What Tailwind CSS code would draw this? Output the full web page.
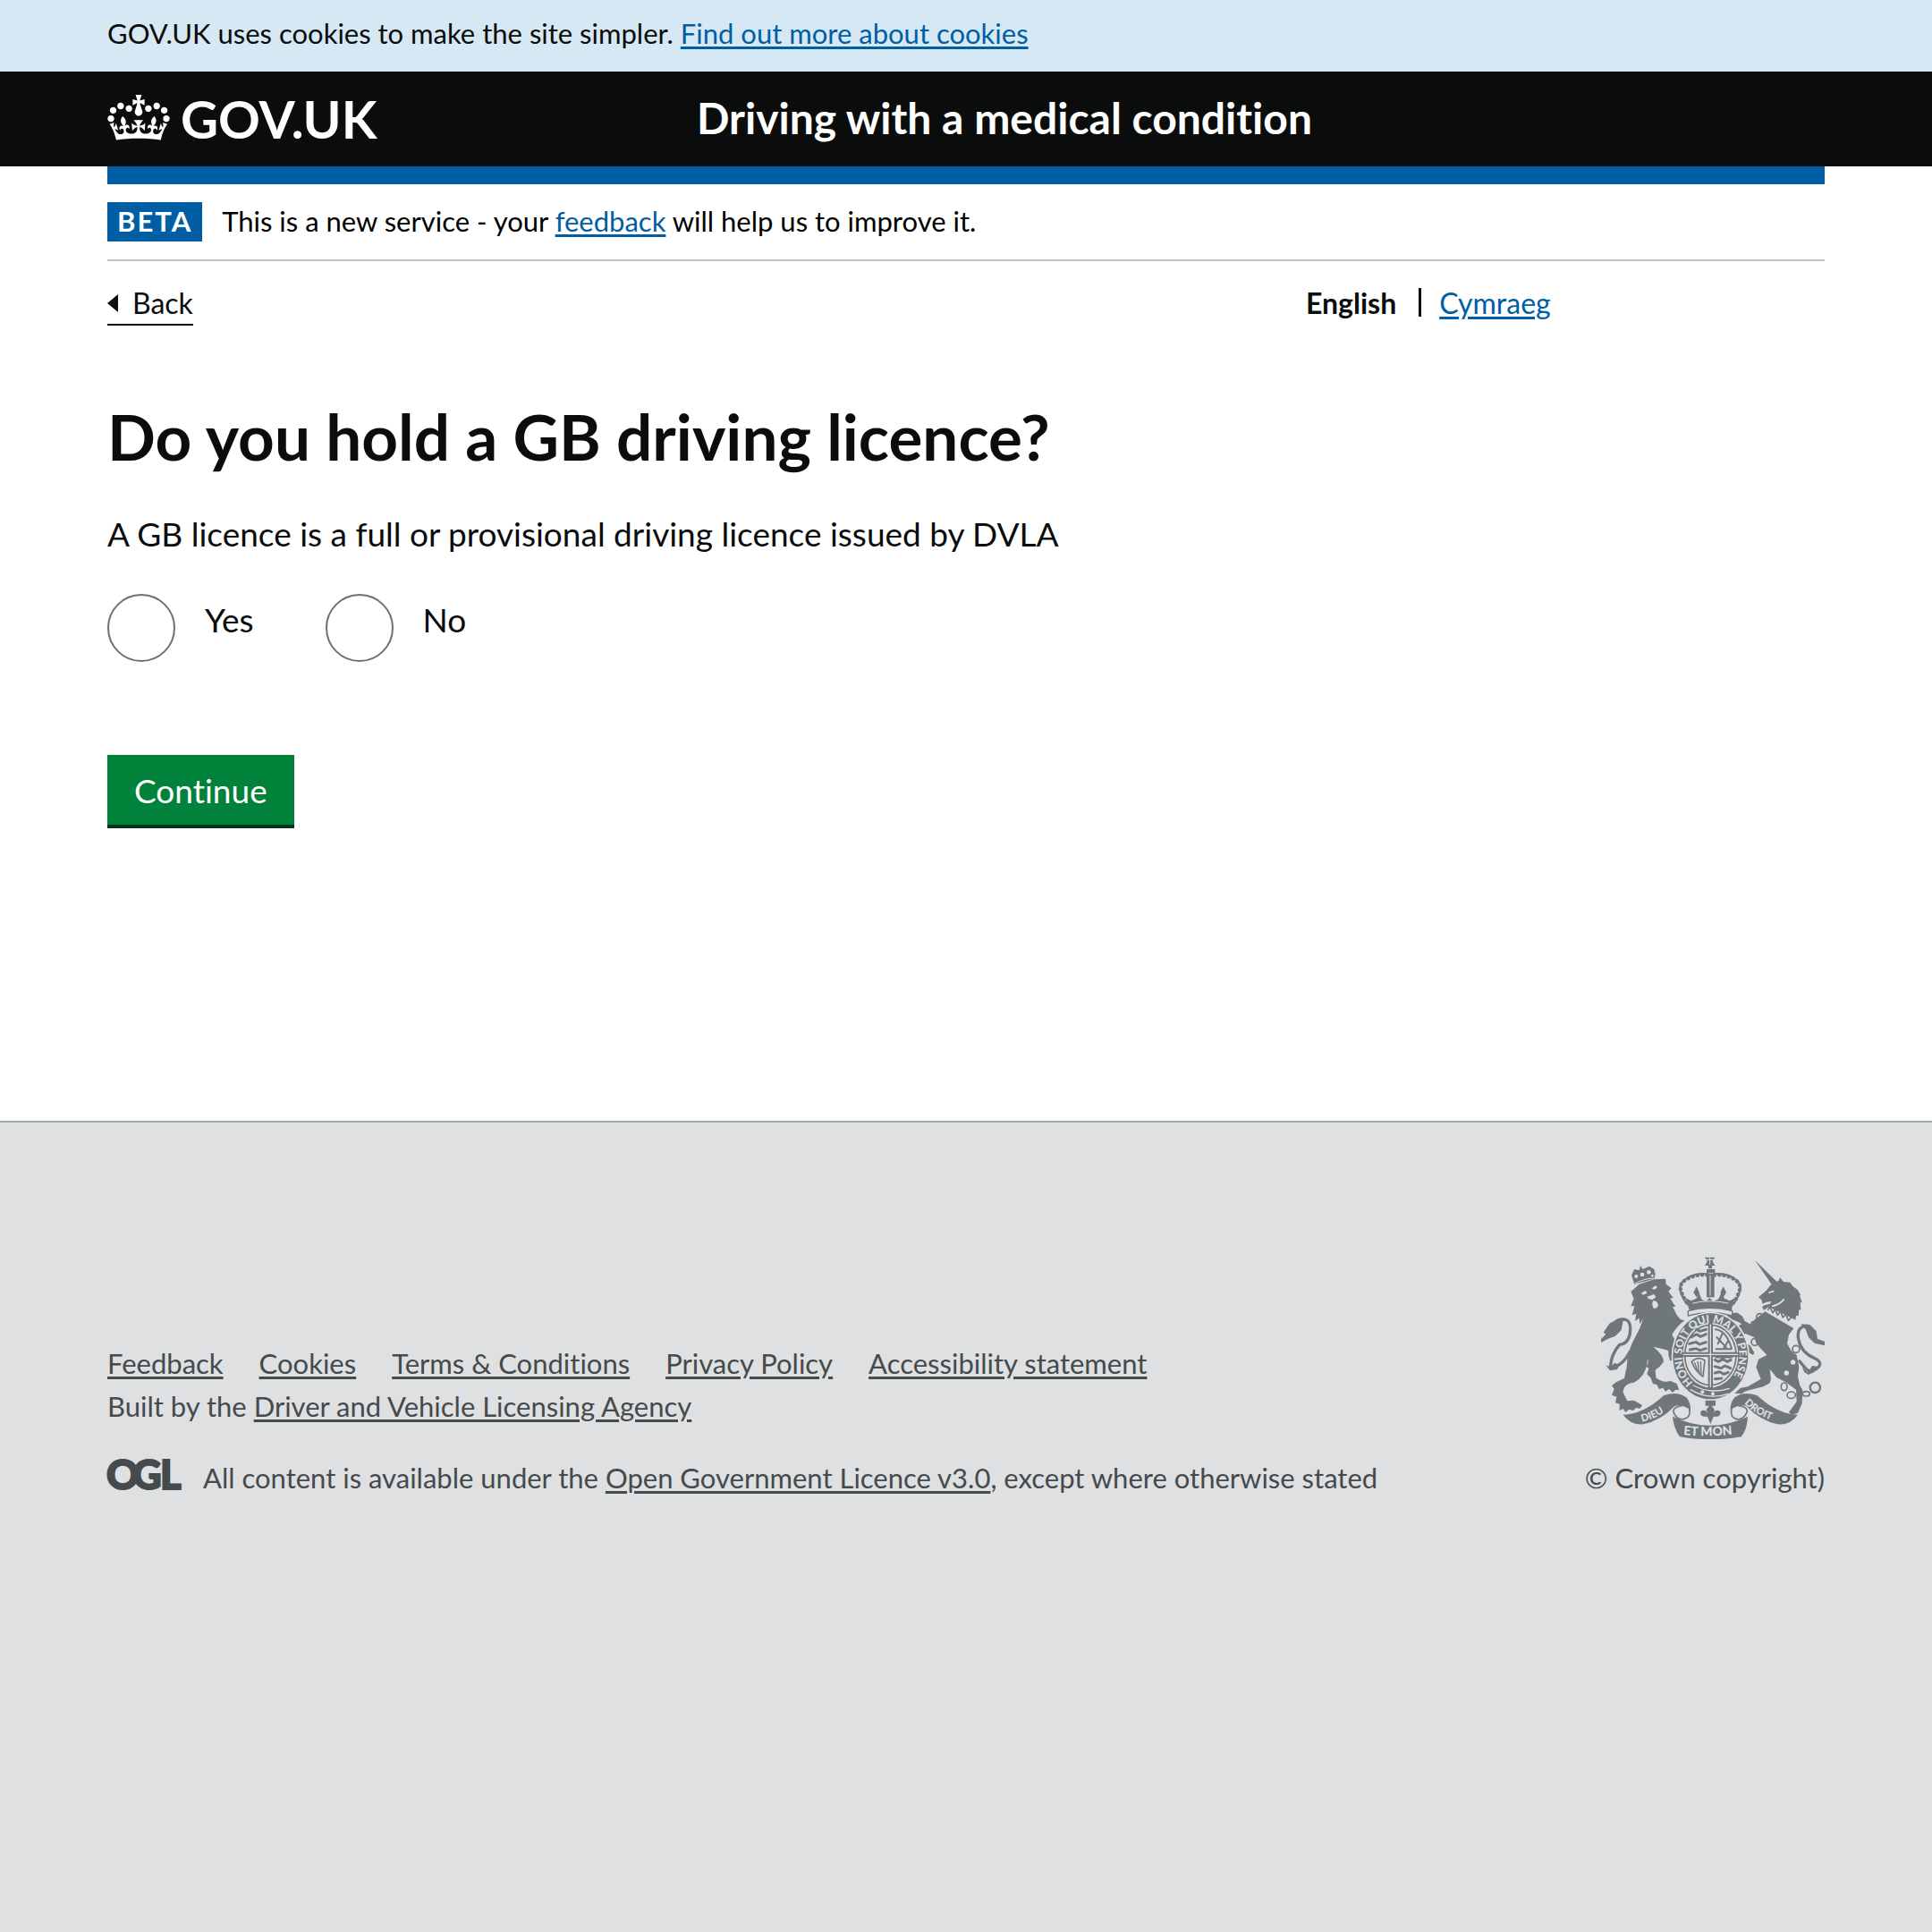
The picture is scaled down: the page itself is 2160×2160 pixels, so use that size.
<!DOCTYPE html>
<html lang="en">
<head>
<meta charset="utf-8">
<meta name="viewport" content="width=device-width, initial-scale=1">
<title>Do you hold a GB driving licence? - GOV.UK</title>
<script src="https://cdn.jsdelivr.net/npm/@tailwindcss/browser@4"></script>
</head>
<body class="flex min-h-screen flex-col bg-white font-['Lato',sans-serif] text-[31px] leading-10 text-[#0b0c0c] [font-variant-ligatures:none]">

  <div class="bg-[#d5e8f3] px-[120px] pt-[17px] pb-[23px]">
    <p>GOV.UK uses cookies to make the site simpler. <a href="#" class="text-[#005ea5] underline decoration-[3px] underline-offset-[3px]">Find out more about cookies</a></p>
  </div>

  <header class="bg-[#0b0c0c] px-[120px] text-white">
    <div class="flex h-[106px] items-center">
      <a href="#" class="flex w-[659px] items-center gap-3 text-[58px] leading-[60px] font-bold">
        <svg class="mb-1 h-[51px] w-[70px] fill-white" viewBox="0 0 132 97" aria-hidden="true"><path d="M25 30.2c3.5 1.5 7.7-.2 9.1-3.7 1.5-3.6-.2-7.8-3.9-9.2-3.6-1.4-7.6.3-9.1 3.9-1.4 3.5.3 7.5 3.9 9zM9 39.5c3.6 1.5 7.8-.2 9.2-3.7 1.5-3.6-.2-7.8-3.9-9.1-3.6-1.5-7.6.2-9.1 3.8-1.4 3.5.3 7.5 3.8 9zM4.4 57.2c3.5 1.5 7.7-.2 9.1-3.8 1.5-3.6-.2-7.7-3.9-9.1-3.5-1.5-7.6.3-9.1 3.8-1.4 3.5.3 7.6 3.9 9.1zm38.3-21.4c3.5 1.5 7.7-.2 9.1-3.8 1.5-3.6-.2-7.7-3.9-9.1-3.6-1.5-7.6.3-9.1 3.8-1.3 3.6.4 7.7 3.9 9.1zm64.4-5.6c-3.6 1.5-7.8-.2-9.1-3.7-1.5-3.6.2-7.8 3.8-9.2 3.6-1.4 7.7.3 9.2 3.9 1.3 3.5-.4 7.5-3.9 9zm15.9 9.3c-3.6 1.5-7.7-.2-9.1-3.7-1.5-3.6.2-7.8 3.7-9.1 3.6-1.5 7.7.2 9.2 3.8 1.5 3.5-.3 7.5-3.8 9zm4.7 17.7c-3.6 1.5-7.8-.2-9.2-3.8-1.5-3.6.2-7.7 3.9-9.1 3.6-1.5 7.7.3 9.2 3.8 1.3 3.5-.4 7.6-3.9 9.1zM89.3 35.8c-3.6 1.5-7.8-.2-9.2-3.8-1.4-3.6.2-7.7 3.9-9.1 3.6-1.5 7.7.3 9.2 3.8 1.4 3.6-.3 7.7-3.9 9.1zM69.7 17.7l8.9 4.7V9.3l-8.9 2.8c-.2-.3-.5-.6-.9-.9L72.4 0H59.6l3.5 11.2c-.3.3-.6.5-.9.9l-8.8-2.8v13.1l8.8-4.7c.3.3.6.7.9.9l-5 15.4v.1c-.2.8-.4 1.6-.4 2.4 0 4.1 3.1 7.5 7 8.1h.2c.3 0 .7.1 1 .1.4 0 .7 0 1-.1h.2c4-.6 7.1-4.1 7.1-8.1 0-.8-.1-1.7-.4-2.4V34l-5.1-15.4c.4-.2.7-.6 1-.9zM66 92.8c16.9 0 32.8 1.1 47.1 3.2 4-16.9 8.9-26.7 14-33.5l-9.6-3.4c1 4.9 1.1 7.2 0 10.2-1.5-1.4-3-4.3-4.2-8.7L108.6 76c2.8-2 5-3.2 7.5-3.3-4.4 9.4-10 11.9-13.6 11.2-4.3-.8-6.3-4.6-5.6-7.9 1-4.7 5.7-5.9 8-.5 4.3-8.7-3-11.4-7.6-8.8 7.1-7.2 7.9-13.5 2.1-21.1-8 6.1-8.1 12.3-4.5 20.8-4.7-5.4-12.1-2.5-9.5 6.2 3.4-5.2 7.9-2 7.2 3.1-.6 4.3-6.4 7.8-13.5 7.2-10.3-.9-10.9-8-11.2-13.8 2.5-.5 7.1 1.8 11 7.3L80.2 60c-4.1 4.4-8 5.3-12.3 5.4 1.4-4.4 8-11.6 8-11.6H55.5s6.4 7.2 7.9 11.6c-4.2-.1-8-1-12.3-5.4l1.4 16.4c3.9-5.5 8.5-7.7 10.9-7.3-.3 5.8-.9 12.8-11.1 13.8-7.2.6-12.9-2.9-13.5-7.2-.7-5 3.8-8.3 7.1-3.1 2.7-8.7-4.6-11.6-9.4-6.2 3.7-8.5 3.6-14.7-4.6-20.8-5.8 7.6-5 13.9 2.2 21.1-4.7-2.6-11.9.1-7.7 8.8 2.3-5.5 7.1-4.2 8.1.5.7 3.3-1.3 7.1-5.7 7.9-3.5.7-9-1.8-13.5-11.2 2.5.1 4.7 1.3 7.5 3.3l-4.7-15.4c-1.2 4.4-2.7 7.2-4.3 8.7-1.1-3-.9-5.3 0-10.2l-9.5 3.4c5 6.9 9.9 16.7 14 33.5 14.8-2.1 30.8-3.2 47.7-3.2z"/></svg>
        <span>GOV.UK</span>
      </a>
      <a href="#" class="pb-0.5 text-5xl leading-[60px] font-bold">Driving with a medical condition</a>
    </div>
  </header>

  <div class="flex-1 px-[120px]">
    <div class="h-5 bg-[#005ea5]"></div>

    <div class="flex items-center gap-[22px] border-b-2 border-[#bfc1c3] py-5">
      <strong class="bg-[#005ea5] px-[11px] pt-px pb-[3px] tracking-[2px] text-white">BETA</strong>
      <p class="pb-0.5 text-black">This is a new service - your <a href="#" class="text-[#005ea5] underline decoration-[3px] underline-offset-[3px]">feedback</a> will help us to improve it.</p>
    </div>

    <div class="grid grid-cols-[1340px_1fr] items-start pt-[27px] text-[32px]">
      <a href="#" class="flex items-center gap-4 justify-self-start border-b-2 border-[#0b0c0c] pb-[3px]">
        <svg class="h-5 w-3 fill-[#0b0c0c]" viewBox="0 0 12 20" aria-hidden="true"><path d="M12 0v20L0 10z"/></svg>
        <span>Back</span>
      </a>
      <nav aria-label="Language" class="flex items-start">
        <span class="mr-[25px] font-bold">English</span>
        <span class="mt-[3px] mr-5 h-8 w-[3px] bg-[#0b0c0c]"></span>
        <a href="#" class="text-[#005ea5] underline decoration-[3px] underline-offset-[3px]">Cymraeg</a>
      </nav>
    </div>

    <main class="pt-[84px]">
      <h1 id="question" class="text-[71px] leading-[80px] font-bold">Do you hold a GB driving licence?</h1>
      <p class="mt-11 text-[37px] leading-[50px]">A GB licence is a full or provisional driving licence issued by DVLA</p>

      <form onsubmit="return false">
        <fieldset aria-labelledby="question" class="mt-[42px] flex gap-20 text-[37px] leading-[50px]">
          <div class="flex gap-[33px]">
            <input type="radio" name="licence" id="licence-yes" class="size-[76px] appearance-none rounded-full border-2 border-[#6f7071] checked:bg-[#6f7071]">
            <label for="licence-yes" class="pt-1">Yes</label>
          </div>
          <div class="flex gap-[33px]">
            <input type="radio" name="licence" id="licence-no" class="size-[76px] appearance-none rounded-full border-2 border-[#6f7071] checked:bg-[#6f7071]">
            <label for="licence-no" class="pt-1">No</label>
          </div>
        </fieldset>
        <button class="mt-[104px] border-b-4 border-[#003618] bg-[#00823b] px-[30px] pt-[15px] pb-[13px] text-[37px] leading-[50px] text-white">Continue</button>
      </form>
    </main>
  </div>

  <footer class="mt-[317px] h-[907px] border-t-2 border-[#a1acb2] bg-[#dee0e2] px-[120px] pt-[150px] text-[#454a4c]">
    <div class="flex items-end justify-between">
      <div class="pb-px">
        <ul class="flex gap-10">
          <li><a href="#" class="underline decoration-[3px] underline-offset-[3px]">Feedback</a></li>
          <li><a href="#" class="underline decoration-[3px] underline-offset-[3px]">Cookies</a></li>
          <li><a href="#" class="underline decoration-[3px] underline-offset-[3px]">Terms &amp; Conditions</a></li>
          <li><a href="#" class="underline decoration-[3px] underline-offset-[3px]">Privacy Policy</a></li>
          <li><a href="#" class="underline decoration-[3px] underline-offset-[3px]">Accessibility statement</a></li>
        </ul>
        <p class="mt-2">Built by the <a href="#" class="underline decoration-[3px] underline-offset-[3px]">Driver and Vehicle Licensing Agency</a></p>
        <div class="mt-10 flex items-start gap-[25px]">
          <svg class="h-[35px] w-[82px] overflow-visible" viewBox="0 0 82 35" role="img" aria-label="OGL">
            <text x="-1 28 59" y="33" fill="#454a4c" stroke="#454a4c" stroke-width="2" font-family="Lato" font-weight="900" font-size="45">OGL</text>
          </svg>
          <p>All content is available under the <a href="#" class="underline decoration-[3px] underline-offset-[3px]">Open Government Licence v3.0</a>, except where otherwise stated</p>
        </div>
      </div>

      <a href="#" class="flex flex-col items-end gap-[23px] pb-px">
        <svg class="h-[204px] w-[250px]" viewBox="30 30 750 612" fill="none" stroke-linejoin="round" stroke-linecap="round" aria-hidden="true">
          <defs>
            <path id="garter" d="M339 452A96 112 0 1 1 455 452"/>
            <path id="dieu" d="M168 584Q220 572 268 532"/>
            <path id="etmon" d="M306 627Q395 636 486 625"/>
            <path id="droit" d="M510 522Q560 572 636 588"/>
          </defs>
          <!-- lion -->
          <g fill="#6f777b">
            <path d="M130 148L158 122L208 106L246 104L248 122L266 136L256 146L272 168L262 170L280 198L270 198L284 226L296 240L310 244Q285 262 268 292L284 320L300 350L296 385L285 376L280 388L270 374L262 380L256 360V345L232 338L205 332Q240 360 240 382Q232 396 212 410L214 436Q240 456 262 446L284 456L292 478L280 476L270 486L258 474L246 482L238 470L224 474L218 460L204 456L196 436L184 424L190 404L180 398Q192 388 186 372Q184 430 140 452Q104 456 104 486L118 514L140 512L154 520L168 528L160 540L148 536L138 546L124 542L112 552L104 540L92 546V524L78 520L82 500L66 494L74 474L66 462L82 450L108 438L116 400L120 356L134 320L160 270L172 236L160 256L158 236L144 246L148 222L134 226L142 196L130 196L140 170Z"/>
            <path d="M142 122L132 92L142 72L158 76L162 60L170 72L192 62L208 72L212 90L208 104Z"/>
            <path d="M30 318V306L46 290L38 284L58 254L84 240L104 244L98 276L78 296L52 306Z"/>
            <path d="M46 394L62 400L76 386L92 394L84 408L60 412Z"/>
          </g>
          <path d="M84 244Q130 228 128 275T92 325Q62 360 62 400Q100 400 126 350" stroke="#6f777b" stroke-width="10"/>
          <g fill="#dee0e2">
            <path d="M164 152L180 144L184 152L172 158ZM200 136L214 126L218 134L208 140ZM184 164L208 156L214 166L202 174L190 172ZM204 178Q218 176 222 192Q218 204 208 204Q198 196 204 178Z"/>
            <circle cx="148" cy="96" r="6"/><circle cx="168" cy="90" r="7"/><circle cx="190" cy="82" r="7"/><circle cx="202" cy="94" r="4"/>
          </g>
          <path d="M144 120Q170 104 206 102" stroke="#dee0e2" stroke-width="3"/>
          <!-- unicorn -->
          <g fill="#6f777b">
            <path d="M546 42l80 78-16 14z"/>
            <path d="M558 166l26-22 16-20 26-14 4-10 12 14 22 2 8 12 18 14 10 18-4 0 8 24-6 0 2 24-6 0-2 20-8 0-2 14-90-44-16 12-6-12 10-6 16-4 6-8-18 2-12 6-4-14z"/>
            <path d="M580 214l96 56-16 22-6 30 14 24 18 14 8 40-4 30 6 30 10 18-2 44-14 32-20 6-10-8 26-36-2-40-30-22-36-20-16-20-6-6 4 32-4 14-22 12-42 10-20 6-10 8-24-2 20-18 24-4 24-14 20-12-6-14-10-26 8-26 28-14-20-22-16-18-6-20-30-12-22 10 12 16 26 14 14 24-4 8-20-12-16-30-24-32-2-18 24-12-10-6-14-6-18-4-8-16 14-6 22 0 16 12 8 16 22 12 12-18z"/>
            <path d="M700 256l30 2 22 22 4 26 24 8 0 14-34-8-20-20-10-26z"/>
            <path d="M704 400l20 18 14-22 18 2-10 16-20 12-14-8z"/>
          </g>
          <path d="M724 262q-40 0-32 44t52 64-8 46q-14 0-40-36" stroke="#6f777b" stroke-width="10"/>
          <path d="M606 196q24-6 36-22" stroke="#dee0e2" stroke-width="6"/>
          <path d="M590 208l6-10 10 20 8-12 8 20 10-12 8 20 10-12 8 22 10-10" stroke="#6f777b" stroke-width="5"/>
          <path d="M594 150l14-4" stroke="#dee0e2" stroke-width="5"/>
          <g fill="#dee0e2"><circle cx="674" cy="384" r="8"/><circle cx="652" cy="420" r="8"/></g>
          <g stroke="#6f777b" stroke-width="5">
            <circle cx="562" cy="232" r="11"/><circle cx="543" cy="256" r="9"/><circle cx="546" cy="316" r="12"/><circle cx="684" cy="340" r="12"/>
            <ellipse cx="644" cy="466" rx="10" ry="13"/><ellipse cx="668" cy="494" rx="14" ry="11"/><ellipse cx="718" cy="490" rx="12" ry="8"/><circle cx="748" cy="469" r="17" stroke-width="7"/>
          </g>
          <!-- royal crown -->
          <g fill="#6f777b">
            <path d="M378 32h34l-8 14 8 14h-34l8-14zM390 58h12v12h-12z"/>
            <path d="M314 168l18 10 18-8 8-20 10 24 14 6 12-12 12 12 18-8 10-22 10 20 18 8 18-10-14 42q-70-24-140 0z"/>
            <path d="M384 86h26v80h-26z"/><path d="M350 130l10 20-10 16-10-16zM440 130l10 20-10 16-10-16z"/>
            <path d="M328 204q66-24 142 0l-4 10q-66-20-134 0z"/>
          </g>
          <path d="M388 88q-40 -4-70 14t-22 44 24 44M408 88q40-4 68 14t20 44-22 44" stroke="#6f777b" stroke-width="6"/>
          <path d="M386 92q-36-4-66 12t-22 40 20 40M410 92q36-4 64 12t20 40-18 40" stroke="#6f777b" stroke-width="13" stroke-dasharray="1 15"/>
          <path d="M384 72h28v12h-28z" fill="#6f777b"/>
          <path d="M396 94v66M382 40h26M395 34v22M338 186q56-14 118 0" stroke="#dee0e2" stroke-width="3"/>
          <path d="M322 212q72-20 148 0v16q-74-22-148 0z" fill="#dee0e2" stroke="#6f777b" stroke-width="4"/>
          <!-- garter and shield -->
          <ellipse cx="397" cy="364" rx="131" ry="149" fill="#dee0e2"/>
          <ellipse cx="397" cy="364" rx="126" ry="144" fill="#6f777b"/>
          <ellipse cx="397" cy="360" rx="93" ry="109" fill="#dee0e2"/>
          <ellipse cx="397" cy="360" rx="86" ry="101" fill="#dee0e2" stroke="#6f777b" stroke-width="5"/>
          <text fill="#dee0e2" font-family="Lato" font-weight="900" font-size="36"><textPath href="#garter">HONI SOIT QUI MAL Y PENSE</textPath></text>
          <g stroke="#6f777b" stroke-width="9">
            <path d="M332 300l18-10 14 8 18-8M326 322l22-6 12 8 24-8M328 342l20-4 14 6 20-6M350 274l12 6 20-6" stroke-dasharray="16 6"/>
            <path d="M412 376l12 6 14-8 16 8 12-6M412 398l20 6 14-8 18 8M412 420l16-4 14 8 14-6M412 440l22-2M416 366h52" stroke-dasharray="16 6"/>
            <path d="M414 274q36 4 54 64M418 300l32 34M436 290l-14 32M458 310l-18 30M416 340h50" stroke-width="6"/>
            <path d="M334 382q22-20 44-4l-6 54q-26-18-38-50z" stroke-width="5"/>
            <path d="M344 386l10 26M354 382l6 38M364 382l2 40" stroke-width="4"/>
          </g>
          <path d="M397 258v208M306 358h182" stroke="#6f777b" stroke-width="16"/>
          <path d="M397 258v208M306 358h182" stroke="#dee0e2" stroke-width="4"/>
          <path d="M340 462q56 30 120 10M330 476q60 36 126 14" stroke="#dee0e2" stroke-width="4"/>
          <g fill="#dee0e2"><circle cx="370" cy="484" r="6"/><circle cx="405" cy="490" r="6"/></g>
          <!-- motto scroll and lily -->
          <g fill="#6f777b">
            <path d="M104 560Q170 560 240 496Q285 480 316 502Q332 520 330 548L312 534Q292 524 276 532Q230 580 172 592Q130 596 104 560Z"/>
            <path d="M690 560Q624 560 554 496Q509 480 478 502Q462 520 464 548L482 534Q502 524 518 532Q564 580 622 592Q664 596 690 560Z"/>
            <path d="M270 566q126 60 252 0-2 44-22 68-104 18-206 0-20-28-24-68z"/>
            <path d="M380 512h34v18h-34zM397 524l14 20-8 16q10-22 26-12 6 14-10 18h-12l-10 26-10-26h-12q-16-4-10-18 16-10 26 12l-8-16z"/>
          </g>
          <path d="M326 540q6 28-16 34t-34-16 24-28M468 540q-6 28 14 34t34-16-24-28" stroke="#6f777b" stroke-width="5" fill="#dee0e2"/>
          <g fill="#dee0e2" font-family="Lato" font-weight="900">
            <text font-size="34"><textPath href="#dieu">DIEU</textPath></text>
            <text font-size="42"><textPath href="#etmon">ET MON</textPath></text>
            <text font-size="34"><textPath href="#droit">DROIT</textPath></text>
          </g>
        </svg>
        <span>© Crown copyright)</span>
      </a>
    </div>
  </footer>
</body>
</html>
